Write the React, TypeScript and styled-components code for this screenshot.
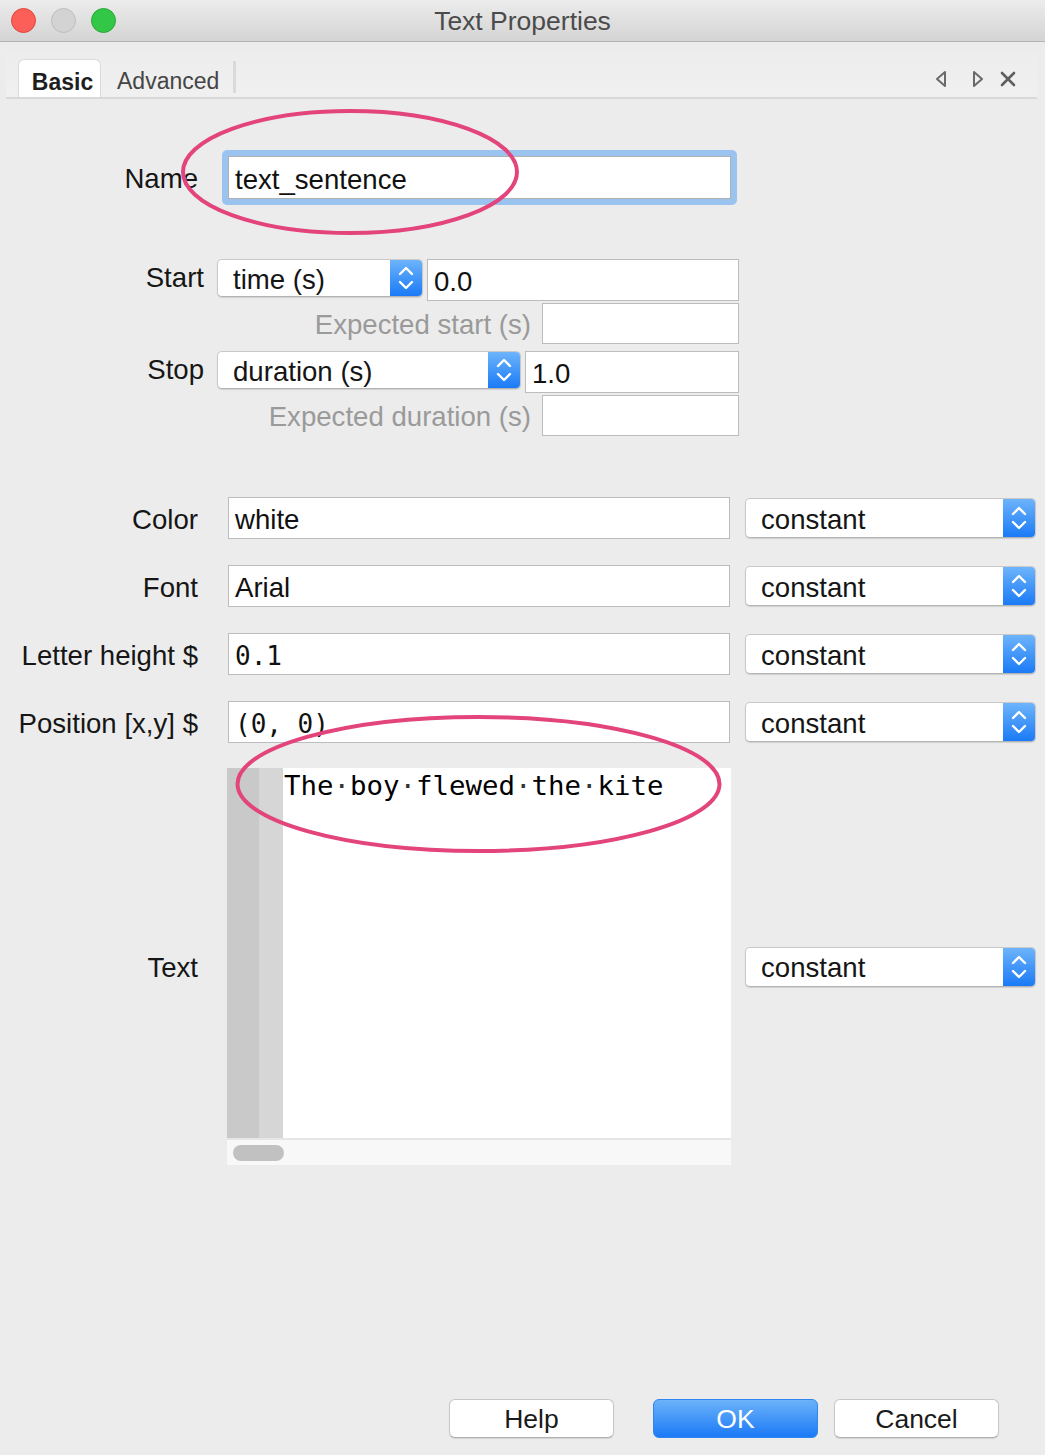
import React from 'react';
import styled, { createGlobalStyle } from 'styled-components';

const Global = createGlobalStyle`
  html, body { margin: 0; padding: 0; background: #ececec; }
  body { font-family: "Liberation Sans", Arial, sans-serif; }
  * { box-sizing: border-box; }
`;

const Window = styled.div`
  position: relative;
  width: 1045px;
  height: 1455px;
  background: #ececec;
  display: flex;
  flex-direction: column;
  overflow: hidden;
`;

const TitleBar = styled.div`
  flex: none;
  height: 42px;
  background: linear-gradient(#ececec, #d4d4d4);
  border-bottom: 1px solid #b3b3b3;
  display: grid;
  grid-template-columns: 1fr auto 1fr;
  align-items: center;
`;

const Lights = styled.div`
  display: flex;
  gap: 15px;
  padding-left: 11px;
`;

const Light = styled.span<{ $fill: string; $edge: string }>`
  width: 25px;
  height: 25px;
  border-radius: 50%;
  background: ${(p) => p.$fill};
  border: 1px solid ${(p) => p.$edge};
`;

const Title = styled.div`
  font-size: 26.5px;
  color: #4b4b4b;
  padding-top: 1px;
`;

const TabStrip = styled.div`
  flex: none;
  margin: 10px 8px 0 6px;
  height: 47px;
  border-bottom: 2px solid #d8d8d8;
  background: linear-gradient(#ededed, #f0f0f0);
  display: flex;
  align-items: flex-end;
  padding-left: 12px;
`;

const Tab = styled.div<{ $active?: boolean }>`
  height: 38px;
  display: flex;
  align-items: center;
  font-size: 23px;
  padding-top: 7px;
  ${(p) =>
    p.$active
      ? `
    width: 83px;
    justify-content: center;
    padding-left: 6px;
    background: #ffffff;
    border: 1px solid #dadada;
    border-bottom: none;
    border-radius: 6px 6px 0 0;
    font-weight: bold;
    color: #1e1e1e;
  `
      : `
    padding-left: 16px;
    padding-right: 14px;
    color: #454545;
  `}
`;

const TabDivider = styled.span`
  align-self: center;
  width: 3px;
  height: 32px;
  margin-top: 4px;
  background: #dadada;
`;

const NavIcons = styled.div`
  margin-left: auto;
  align-self: center;
  display: flex;
  align-items: center;
  padding-right: 20px;
  margin-top: 8px;
`;

const NavGap = styled.span<{ $w: number }>`
  width: ${(p) => p.$w}px;
`;

const Content = styled.div`
  flex: 1;
  display: flex;
  flex-direction: column;
`;

const Row = styled.div<{ $top: number; $align?: string }>`
  display: flex;
  align-items: ${(p) => p.$align || 'center'};
  margin-top: ${(p) => p.$top}px;
`;

const Label = styled.div<{ $w: number; $gap: number; $muted?: boolean; $lh?: number }>`
  width: ${(p) => p.$w}px;
  margin-right: ${(p) => p.$gap}px;
  text-align: right;
  font-size: 27.6px;
  padding-top: ${(p) => (p.$lh ? 0 : 3)}px;
  white-space: nowrap;
  color: ${(p) => (p.$muted ? '#9a9a9a' : '#161616')};
  ${(p) => (p.$lh ? `line-height: ${p.$lh}px;` : '')}
`;

const FocusRing = styled.div`
  width: 515px;
  height: 55px;
  padding: 6px;
  border-radius: 5px;
  background: #9bc3ef;
`;

const Input = styled.div<{ $w: number; $h?: number; $mono?: boolean }>`
  width: ${(p) => p.$w}px;
  height: ${(p) => p.$h || 42}px;
  background: #ffffff;
  border: 1px solid #bcbcbc;
  display: flex;
  align-items: center;
  padding: 4px 0 0 6px;
  font-size: ${(p) => (p.$mono ? 26 : 27.6)}px;
  font-family: ${(p) =>
    p.$mono ? '"DejaVu Sans Mono", "Liberation Mono", monospace' : '"Liberation Sans", Arial, sans-serif'};
  color: #111;
  white-space: nowrap;
`;

const NameField = styled(Input)`
  width: 100%;
  height: 100%;
  border-color: #b0b0b0;
`;

const Combo = styled.div<{ $w: number; $h?: number }>`
  width: ${(p) => p.$w}px;
  height: ${(p) => p.$h || 38}px;
  display: flex;
  background: #ffffff;
  border: 1px solid #c9c9c9;
  border-bottom-color: #b3b3b3;
  border-radius: 5px;
  box-shadow: 0 1px 1px rgba(0, 0, 0, 0.12);
  overflow: hidden;
`;

const ComboText = styled.div`
  flex: 1;
  display: flex;
  align-items: center;
  padding: 3px 0 0 15px;
  font-size: 27.6px;
  color: #151515;
`;

const Stepper = styled.div`
  width: 32px;
  flex: none;
  display: flex;
  align-items: center;
  justify-content: center;
  background: linear-gradient(#6db4fb, #1a7af6);
`;

const Gap = styled.span<{ $w: number }>`
  display: inline-block;
  width: ${(p) => p.$w}px;
  flex: none;
`;

const TextArea = styled.div`
  width: 504px;
  height: 397px;
  display: flex;
  flex-direction: column;
  background: #ffffff;
`;

const EditorBody = styled.div`
  flex: 1;
  display: flex;
`;

const GutterOuter = styled.div`
  width: 32px;
  background: #c9c9c9;
`;

const GutterInner = styled.div`
  width: 24px;
  background: #d6d6d6;
`;

const Editor = styled.div`
  flex: 1;
  padding: 2px 0 0 1px;
  font-family: "DejaVu Sans Mono", "Liberation Mono", monospace;
  font-size: 27.4px;
  line-height: 32px;
  color: #000;
  white-space: pre;
`;

const Dot = styled.span`
  color: #333;
`;

const HScroll = styled.div`
  height: 27px;
  border-top: 2px solid #e6e6e6;
  background: #f8f8f8;
  display: flex;
  align-items: center;
  padding-left: 6px;
`;

const Thumb = styled.div`
  width: 51px;
  height: 16px;
  border-radius: 8px;
  background: #c1c1c1;
`;

const ButtonBar = styled.div`
  margin-top: auto;
  margin-bottom: 17px;
  display: flex;
  justify-content: flex-end;
  padding-right: 46px;
`;

const Button = styled.button<{ $primary?: boolean; $ml: number }>`
  width: 165px;
  height: 39px;
  margin-left: ${(p) => p.$ml}px;
  border-radius: 6px;
  font-family: "Liberation Sans", Arial, sans-serif;
  font-size: 26.5px;
  padding: 2px 0 0;
  ${(p) =>
    p.$primary
      ? `
    background: linear-gradient(#6cb2fa, #1b7af6);
    border: 1px solid #2f86f0;
    color: #ffffff;
  `
      : `
    background: #ffffff;
    border: 1px solid #c6c6c6;
    border-bottom-color: #b0b0b0;
    color: #1a1a1a;
    box-shadow: 0 1px 1px rgba(0,0,0,0.1);
  `}
`;

const Overlay = styled.svg`
  position: absolute;
  top: 0;
  left: 0;
  pointer-events: none;
`;

const Chevrons = () => (
  <svg width="20" height="28" viewBox="0 0 20 28">
    <path d="M4 10 L10 4 L16 10" fill="none" stroke="#fff" strokeWidth="2.4" strokeLinecap="round" strokeLinejoin="round" />
    <path d="M4 18 L10 24 L16 18" fill="none" stroke="#fff" strokeWidth="2.4" strokeLinecap="round" strokeLinejoin="round" />
  </svg>
);

const Select = ({ w, h, text }: { w: number; h?: number; text: string }) => (
  <Combo $w={w} $h={h}>
    <ComboText>{text}</ComboText>
    <Stepper>
      <Chevrons />
    </Stepper>
  </Combo>
);

const PropRow = ({
  top,
  label,
  children,
}: {
  top: number;
  label: string;
  children: React.ReactNode;
}) => (
  <Row $top={top}>
    <Label $w={198} $gap={30}>
      {label}
    </Label>
    {children}
    <Gap $w={15} />
    <Select w={291} h={40} text="constant" />
  </Row>
);

const words = ['The', 'boy', 'flewed', 'the', 'kite'];

export default function App() {
  return (
    <>
      <Global />
      <Window>
        <TitleBar>
          <Lights>
            <Light $fill="#fc5f57" $edge="#e0443e" />
            <Light $fill="#d3d3d3" $edge="#bdbdbd" />
            <Light $fill="#33c748" $edge="#27a837" />
          </Lights>
          <Title>Text Properties</Title>
          <span />
        </TitleBar>

        <TabStrip>
          <Tab $active>Basic</Tab>
          <Tab>Advanced</Tab>
          <TabDivider />
          <NavIcons>
            <svg width="12" height="18" viewBox="0 0 12 18">
              <path d="M10 2 L2 9 L10 16 Z" fill="none" stroke="#6a6a6a" strokeWidth="2" strokeLinejoin="round" />
            </svg>
            <NavGap $w={25} />
            <svg width="12" height="18" viewBox="0 0 12 18">
              <path d="M2 2 L10 9 L2 16 Z" fill="none" stroke="#6a6a6a" strokeWidth="2" strokeLinejoin="round" />
            </svg>
            <NavGap $w={15} />
            <svg width="18" height="18" viewBox="0 0 18 18">
              <path d="M3 3 L15 15 M15 3 L3 15" stroke="#5e5e5e" strokeWidth="2.6" strokeLinecap="round" />
            </svg>
          </NavIcons>
        </TabStrip>

        <Content>
          <Row $top={51}>
            <Label $w={198} $gap={24}>
              Name
            </Label>
            <FocusRing>
              <NameField $w={503}>text_sentence</NameField>
            </FocusRing>
          </Row>

          <Row $top={54} $align="flex-start">
            <Label $w={204} $gap={13} $lh={38}>
              Start
            </Label>
            <Select w={206} text="time (s)" />
            <Gap $w={4} />
            <Input $w={312}>0.0</Input>
          </Row>

          <Row $top={2}>
            <Label $w={531} $gap={11} $muted>
              Expected start (s)
            </Label>
            <Input $w={197} $h={41} />
          </Row>

          <Row $top={7} $align="flex-start">
            <Label $w={204} $gap={13} $lh={38}>
              Stop
            </Label>
            <Select w={304} text="duration (s)" />
            <Gap $w={4} />
            <Input $w={214}>1.0</Input>
          </Row>

          <Row $top={2}>
            <Label $w={531} $gap={11} $muted>
              Expected duration (s)
            </Label>
            <Input $w={197} $h={41} />
          </Row>

          <PropRow top={61} label="Color">
            <Input $w={502}>white</Input>
          </PropRow>
          <PropRow top={26} label="Font">
            <Input $w={502}>Arial</Input>
          </PropRow>
          <PropRow top={26} label="Letter height $">
            <Input $w={502} $mono>
              0.1
            </Input>
          </PropRow>
          <PropRow top={26} label="Position [x,y] $">
            <Input $w={502} $mono>
              (0, 0)
            </Input>
          </PropRow>

          <Row $top={25}>
            <Label $w={198} $gap={29}>
              Text
            </Label>
            <TextArea>
              <EditorBody>
                <GutterOuter />
                <GutterInner />
                <Editor>
                  {words.map((w, i) => (
                    <React.Fragment key={i}>
                      {i > 0 && <Dot>·</Dot>}
                      {w}
                    </React.Fragment>
                  ))}
                </Editor>
              </EditorBody>
              <HScroll>
                <Thumb />
              </HScroll>
            </TextArea>
            <Gap $w={14} />
            <Select w={291} h={40} text="constant" />
          </Row>

          <ButtonBar>
            <Button $ml={0}>Help</Button>
            <Button $ml={39} $primary>
              OK
            </Button>
            <Button $ml={16}>Cancel</Button>
          </ButtonBar>
        </Content>

        <Overlay width="1045" height="1455" viewBox="0 0 1045 1455">
          <ellipse cx="350" cy="172" rx="167" ry="61" fill="none" stroke="#e2447b" strokeWidth="4" />
          <ellipse cx="478.5" cy="784" rx="241" ry="67" fill="none" stroke="#e2447b" strokeWidth="4" />
        </Overlay>
      </Window>
    </>
  );
}
